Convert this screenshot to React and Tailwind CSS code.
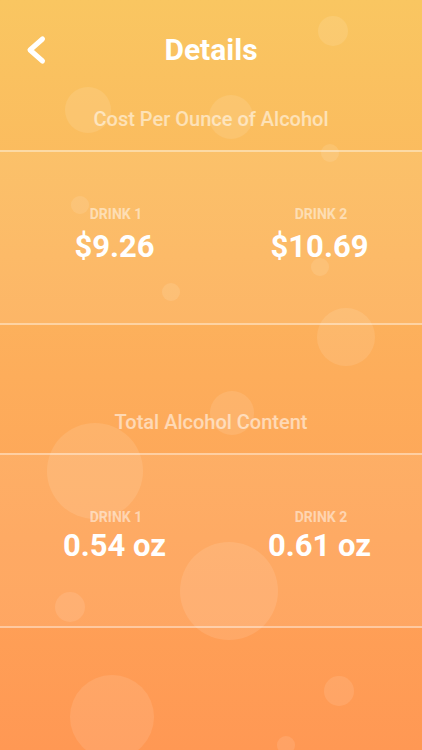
import React from "react";

const bubbles = [
  { x: 333, y: 31, r: 15 },
  { x: 88, y: 110, r: 23 },
  { x: 231, y: 117, r: 22 },
  { x: 330, y: 153, r: 9 },
  { x: 80, y: 205, r: 9 },
  { x: 320, y: 267, r: 9 },
  { x: 171, y: 292, r: 9 },
  { x: 346, y: 337, r: 29 },
  { x: 232, y: 413, r: 22 },
  { x: 95, y: 471, r: 48 },
  { x: 229, y: 591, r: 49 },
  { x: 70, y: 607, r: 15 },
  { x: 112, y: 717, r: 42 },
  { x: 339, y: 691, r: 15 },
  { x: 286, y: 745, r: 9 },
];

const StatBand = ({ left, right, tight }) => {
  return (
    <div className="h-[175px] border-y-2 border-white/40 bg-white/[0.07]">
      <div className="grid grid-cols-2 pl-[12px] pt-[54px]">
        {[left, right].map((v, i) => (
          <div key={i} className="flex flex-col items-center">
            <span className="pl-[3px] text-[14px] leading-[16px] font-bold text-white/50">
              DRINK {i + 1}
            </span>
            <span
              className={`${tight ? "mt-[3px]" : "mt-[7px]"} text-[31px] leading-[36px] font-bold text-white`}
            >
              {v}
            </span>
          </div>
        ))}
      </div>
    </div>
  );
};

const App = () => {
  return (
    <div
      className="relative w-full min-h-screen overflow-hidden bg-gradient-to-b from-[#f9c661] via-[#fdad5b] to-[#ff9854]"
      style={{ fontFamily: "Roboto, 'Noto Sans', sans-serif" }}
    >
      {/* background bubbles */}
      {bubbles.map((b, i) => (
        <div
          key={i}
          className="absolute rounded-full bg-white/10"
          style={{ left: b.x - b.r, top: b.y - b.r, width: b.r * 2, height: b.r * 2 }}
        />
      ))}

      <div className="relative">
        <div className="grid grid-cols-[60px_1fr_60px] items-center h-[60px] mt-[20px]">
          <div className="pl-[25px]">
            <svg width="22" height="32" viewBox="0 0 22 32" fill="none">
              <polyline
                points="17.5,5 5,16 17.5,27"
                stroke="white"
                strokeWidth="5"
                strokeLinecap="round"
                strokeLinejoin="round"
              />
            </svg>
          </div>
          <h1 className="text-center text-[30px] leading-[36px] font-bold text-white">
            Details
          </h1>
          <div />
        </div>

        <h2 className="mt-[27px] mb-[19px] text-center text-[20px] leading-[24px] font-medium text-white/55">
          Cost Per Ounce of Alcohol
        </h2>
        <StatBand left="$9.26" right="$10.69" />

        <h2 className="mt-[85px] mb-[19px] text-center text-[20px] leading-[24px] font-medium text-white/55">
          Total Alcohol Content
        </h2>
        <StatBand left="0.54 oz" right="0.61 oz" tight />
      </div>
    </div>
  );
};

export default App;
